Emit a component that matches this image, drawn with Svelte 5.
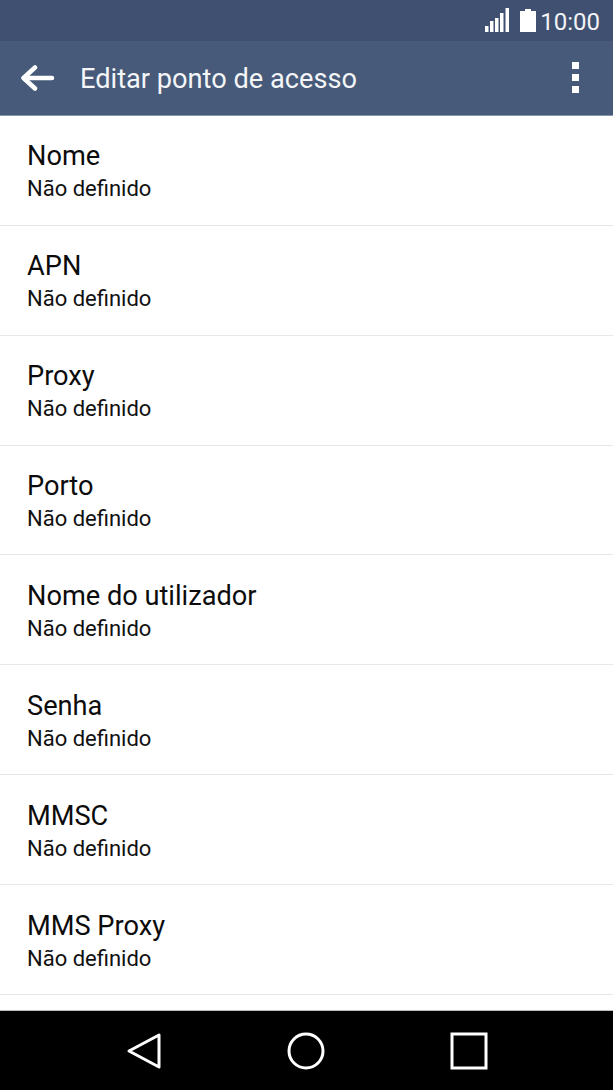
<script>
  // Access point settings screen: every field is still unset
  const fields = ['Nome', 'APN', 'Proxy', 'Porto', 'Nome do utilizador', 'Senha', 'MMSC', 'MMS Proxy'];
</script>

<div class="screen">
  <div class="status">
    <svg class="signal" width="24" height="24" viewBox="0 0 24 24" fill="#fff">
      <rect x="0" y="18" width="3.5" height="6" />
      <rect x="5" y="13" width="3.5" height="11" />
      <rect x="10" y="10" width="3.5" height="14" />
      <rect x="15" y="5" width="3.5" height="19" />
      <rect x="20.5" y="0" width="3.5" height="24" />
    </svg>
    <svg class="battery" width="16" height="24" viewBox="0 0 16 24" fill="#fff">
      <path d="M5 1h6v2h5v21H0V3h5z" />
    </svg>
    <span class="time">10:00</span>
  </div>

  <header class="bar">
    <svg class="back" width="34" height="28" viewBox="0 0 34 28" fill="none" stroke="#fff" stroke-width="4.5" stroke-linecap="round" stroke-linejoin="round">
      <path d="M31 14H4M14 3.5L2.5 14 14 24.5" />
    </svg>
    <h1>Editar ponto de acesso</h1>
    <div class="more"><i></i><i></i><i></i></div>
  </header>

  <main class="list">
    {#each fields as name}
      <div class="row">
        <div class="name">{name}</div>
        <div class="value">Não definido</div>
      </div>
    {/each}
  </main>

  <nav class="keys">
    <svg width="36" height="38" viewBox="0 0 36 38" fill="none" stroke="#fff" stroke-width="3" stroke-linejoin="round">
      <path d="M33 3v32L3 19z" />
    </svg>
    <svg width="38" height="38" viewBox="0 0 38 38" fill="none" stroke="#fff" stroke-width="3">
      <circle cx="19" cy="19" r="17" />
    </svg>
    <svg width="38" height="38" viewBox="0 0 38 38" fill="none" stroke="#fff" stroke-width="3">
      <rect x="2" y="2" width="34" height="34" />
    </svg>
  </nav>
</div>

<style>
  :global(body) {
    margin: 0;
    background: #fff;
  }
  .screen {
    width: 613px;
    height: 1090px;
    display: flex;
    flex-direction: column;
    overflow: hidden;
    font-family: Roboto, "Liberation Sans", sans-serif;
  }
  .status {
    height: 41px;
    flex-shrink: 0;
    background: #3f5070;
    display: flex;
    align-items: flex-start;
    justify-content: flex-end;
    padding: 8px 13px 0 0;
    color: #fff;
    box-sizing: border-box;
  }
  .signal {
    margin-right: 11px;
  }
  .battery {
    margin-right: 4px;
  }
  .time {
    font-size: 24px;
    line-height: 28px;
    color: #f2f4f7;
  }
  .bar {
    height: 75px;
    flex-shrink: 0;
    background: #475a79;
    display: flex;
    align-items: center;
    padding: 0 34px 0 21px;
    box-sizing: border-box;
    border-bottom: 1px solid #8a97ab;
  }
  .back {
    flex-shrink: 0;
  }
  .bar h1 {
    flex: 1;
    margin: 2px 0 0 25px;
    font-size: 27.2px;
    font-weight: 400;
    color: #f4f6f8;
  }
  .more {
    display: flex;
    flex-direction: column;
    gap: 5px;
    margin-top: -1px;
  }
  .more i {
    display: block;
    width: 7px;
    height: 7px;
    background: #fff;
  }
  .list {
    flex: 1;
    min-height: 0;
    overflow: hidden;
    background: #fff;
  }
  .row {
    height: 109.86px;
    box-sizing: border-box;
    padding: 24.49px 27px 0;
    border-bottom: 1px solid #e8e8e8;
  }
  .name {
    font-size: 27.2px;
    line-height: 32px;
    color: #0c0c0c;
  }
  .value {
    font-size: 22px;
    line-height: 27px;
    margin-top: 3px;
    color: #111;
  }
  .keys {
    height: 80px;
    flex-shrink: 0;
    background: #000;
    border-top: 1px solid #bbb;
    box-sizing: border-box;
    display: flex;
    align-items: flex-start;
    padding: 21px 0 0 126px;
    gap: 125px;
  }
</style>
